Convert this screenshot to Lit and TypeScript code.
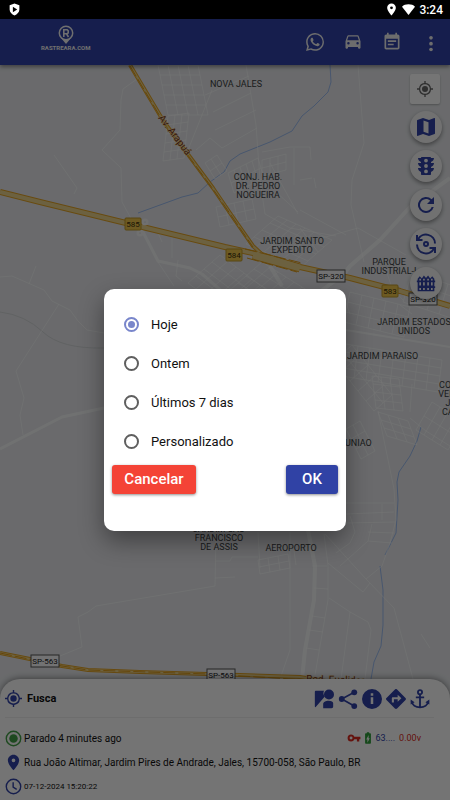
import { LitElement, html, svg, css } from "lit";
import { customElement, state } from "lit/decorators.js";

type Point = [number, number];

/** A patch of city blocks: origin, block vectors and block counts. */
interface Blocks { o: Point; u: Point; v: Point; n: number; m: number; }

const blocksPath = ({ o, u, v, n, m }: Blocks): string => {
  let d = "";
  for (let i = 0; i <= n; i++) {
    const x = o[0] + u[0] * i, y = o[1] + u[1] * i;
    d += `M${x} ${y}L${x + v[0] * m} ${y + v[1] * m}`;
  }
  for (let j = 0; j <= m; j++) {
    const x = o[0] + v[0] * j, y = o[1] + v[1] * j;
    d += `M${x} ${y}L${x + u[0] * n} ${y + u[1] * n}`;
  }
  return d;
};

const blocks: Blocks[] = [
  { o: [158, 65], u: [10, 0], v: [2, 10], n: 4, m: 5 },
  { o: [168, 116], u: [7, -1], v: [-1, 9], n: 3, m: 5 },
  { o: [205, 163], u: [6, -4], v: [5, 8], n: 2, m: 2 },
  { o: [216, 207], u: [9, -2], v: [2, 10], n: 4, m: 2 },
  { o: [228, 173], u: [6, -3], v: [3, 10], n: 5, m: 2 },
  { o: [262, 160], u: [8, -2], v: [0, 8], n: 3, m: 2 },
  { o: [278, 216], u: [9, 4], v: [-8, 7], n: 6, m: 4 },
  { o: [220, 255], u: [8, 6], v: [-8, 7], n: 6, m: 4 },
  { o: [262, 262], u: [8, 5], v: [-8, 7], n: 6, m: 5 },
  { o: [350, 292], u: [12, 3], v: [-2, 10], n: 5, m: 3 },
  { o: [346, 344], u: [12, 2], v: [-1, 8], n: 8, m: 4 },
  { o: [352, 345], u: [8, 10], v: [-9, 8], n: 5, m: 2 },
  { o: [372, 376], u: [9, 1], v: [1, 8], n: 3, m: 4 },
  { o: [378, 412], u: [10, 3], v: [3, 8], n: 3, m: 3 },
  { o: [432, 402], u: [8, 5], v: [-8, 14], n: 4, m: 2 },
  { o: [346, 429], u: [7, -4], v: [5, 10], n: 2, m: 3 },
  { o: [258, 560], u: [10, -2], v: [1, 7], n: 3, m: 2 },
  { o: [412, 272], u: [12, 4], v: [-3, 10], n: 4, m: 3 },
];

const streets = [
  "M137 79L123 89L121 100L120 130L102 150L121 168L122 202L133 222",
  "M54 155L77 188L74 194M36 266L29 284M0 277L12 276L44 290L52 301L70 310L78 321L87 330L104 333M59 304L16 371L24 398L20 415L23 435",
  "M60 656L82 647L78 617L88 612L96 606L215 586L216 535M215 578L235 577M216 561L230 561L232 557L258 557",
  "M246 65L256 125L260 180L265 214L290 228L336 236M205 95L249 76M213 112L251 93M215 130L256 110M222 148L257 128M196 150L210 138L222 148M212 90L188 150",
  "M290 147L310 147L311 160M294 148L294 185M262 152L290 147M300 180L312 178M314 178L316 188M270 163L298 214M276 192L298 212",
  "M358 65L364 143L352 180L351 205L364 262M322 238L358 228L406 255M346 235L300 210",
  "M156 228L162 242M172 236L172 258M178 260L176 276L182 281M158 262L174 286M300 228L318 252",
  "M378 411L394 489L396 520L390 543L382 566L366 579M346 503L394 503M346 514L394 512M346 523L395 522M382 504L382 520M372 524L368 541L340 566M368 532L394 533M368 541L392 543M350 516L355 532L350 543L336 553",
  "M410 412L412 384M410 418L426 431L450 446M325 534L366 579L394 608L413 679M328 563L363 592L370 583M329 598L350 612L368 622L371 630L365 679M350 612L341 679M324 534L328 565L328 600L315 675M258 532L260 568M290 532L290 650L280 679M294 551L296 565",
  "M312 566L327 566M314 588L328 589M312 616L325 618M309 630L323 632M306 648L319 650",
  "M421 634L430 648M386 270L392 288L403 300M345 300L350 314M400 305L412 314",
];

const avenues = [
  { d: "M142 230L158 261L190 268L202 274L225 294", w: 3 },
  { d: "M0 449L62 417L104 408", w: 3 },
  { d: "M450 178L410 207L380 240L350 266L344 274L306 302", w: 4 },
  { d: "M308 530L315 566L314 600L305 650L302 679", w: 4 },
  { d: "M270 266L282 286", w: 4 },
  { d: "M346 330L450 347", w: 2 },
];

const rivers = [
  "M330 65L331 82L328 92L314 106L302 116L292 131L270 142L240 154L230 161L224 172L210 182L198 193L182 197L138 213",
  "M421 427L417 441L410 456L399 472L397 482L398 500L396 533L385 555",
  "M380 566L383 590L383 625L381 646L374 662L371 679",
];

const highways = [
  { d: "M0 192L40 202L130 224L225 247L262 255L300 267L350 278L400 291L450 306", w: 6 },
  { d: "M253 255L300 268", w: 9 },
  { d: "M130 65L164 122L190 157L213 188L230 213L253 246L266 258", w: 4 },
  { d: "M0 653L30 659L62 666L88 670L140 672L207 674L300 677L345 684", w: 4 },
];

interface Place { x: number; y: number; lines: string[]; anchor?: string; }
const places: Place[] = [
  { x: 236, y: 87, lines: ["NOVA JALES"] },
  { x: 258, y: 180, lines: ["CONJ. HAB.", "DR. PEDRO", "NOGUEIRA"] },
  { x: 292, y: 244, lines: ["JARDIM SANTO", "EXPEDITO"] },
  { x: 389, y: 265, lines: ["PARQUE", "INDUSTRIAL-I"] },
  { x: 414, y: 325, lines: ["JARDIM ESTADOS", "UNIDOS"] },
  { x: 347, y: 359, lines: ["JARDIM PARAISO"], anchor: "start" },
  { x: 452, y: 388, lines: ["CONJ.", "VERDE", "JD.", "CAIC"] },
  { x: 345, y: 446, lines: ["UNIAO"], anchor: "start" },
  { x: 219, y: 532, lines: ["JARDIM SAO", "FRANCISCO", "DE ASSIS"] },
  { x: 291, y: 551, lines: ["AEROPORTO"] },
];

const exits = [
  { x: 125, y: 218, t: "585" },
  { x: 226, y: 249, t: "584" },
  { x: 382, y: 285, t: "583" },
];
const shields = [
  { x: 317, y: 270, t: "SP-320" },
  { x: 409, y: 293, t: "SP-320" },
  { x: 31, y: 655, t: "SP-563" },
  { x: 207, y: 669, t: "SP-563" },
];

@customElement("city-map")
export class CityMap extends LitElement {
  static styles = css`
    :host { display: block; height: 100%; background: #e6e8eb; }
    svg { display: block; width: 100%; height: 100%; font-family: Roboto, sans-serif; }
    .line { fill: none; stroke-linejoin: round; }
    .street { stroke: #fff; stroke-width: 1; opacity: 0.5; }
    .terrain { stroke: #d3d5d8; stroke-width: 1; }
    .avenue { stroke: #fff; opacity: 0.6; }
    .river { stroke: #9dbcf0; stroke-width: 1; }
    .edge { stroke: #e2a224; }
    .core { stroke: #ecd48c; }
    .stripe { stroke: #dd9a18; stroke-width: 1; stroke-dasharray: 12 3; }
    .place { font-size: 9px; fill: #3c3e42; }
    .road { font-size: 10px; fill: #7a3514; stroke: #f6e7bd; stroke-width: 1; paint-order: stroke; }
    .exit { fill: #eec54a; stroke: #c09a2a; }
    .shield { fill: #f8f9fa; stroke: #555; }
    .num { font-size: 8px; fill: #3d300c; text-anchor: middle; }
    .code { font-size: 8px; fill: #222; text-anchor: middle; }
    .stop { fill: #b9bbbd; stroke: #f4f4f4; stroke-width: 3; }
  `;

  render() {
    return html`
      <svg viewBox="0 65 450 735" preserveAspectRatio="xMidYMin slice" role="img" aria-label="Mapa">
        <path class="line terrain" d="M0 312Q25 315 43 332T104 348" />
        ${rivers.map((d) => svg`<path class="line river" d=${d} />`)}
        ${blocks.map((b) => svg`<path class="line street" d=${blocksPath(b)} />`)}
        ${streets.map((d) => svg`<path class="line street" d=${d} />`)}
        ${avenues.map((a) => svg`<path class="line avenue" d=${a.d} stroke-width=${a.w} />`)}
        ${highways.map((h) => svg`<path class="line edge" d=${h.d} stroke-width=${h.w} />`)}
        ${highways.map((h) => svg`<path class="line core" d=${h.d} stroke-width=${h.w - 2} />`)}
        <path class="line stripe" d="M245 249L302 263M247 258L297 272M130 66L164 123L190 158L213 189L253 247M0 653L62 666L88 670L207 674L345 682" />
        <circle class="stop" cx="145" cy="222" r="2" />
        <circle class="stop" cx="140" cy="233" r="2" />
        ${exits.map((e) => svg`
          <rect class="exit" x=${e.x} y=${e.y} width="16" height="12" rx="1" />
          <text class="num" x=${e.x + 8} y=${e.y + 9}>${e.t}</text>`)}
        ${shields.map((s) => svg`
          <rect class="shield" x=${s.x} y=${s.y} width="28" height="12" />
          <text class="code" x=${s.x + 14} y=${s.y + 9}>${s.t}</text>`)}
        ${places.map((p) => p.lines.map((line, i) => svg`
          <text class="place" x=${p.x} y=${p.y + i * 9} text-anchor=${p.anchor ?? "middle"}>${line}</text>`))}
        <text class="road" transform="translate(158 118) rotate(53)">Av. Arapuá</text>
        <text class="road" transform="translate(306 682) rotate(2)">Rod. Euclides</text>
      </svg>`;
  }
}

const icon = (body: unknown, cls = "") =>
  html`<svg class="icon ${cls}" viewBox="0 0 24 24" aria-hidden="true">${body}</svg>`;

const ICONS = {
  shield: svg`<path fill-rule="evenodd" d="M12 1L3 4v8c0 5 4 9 9 11 5-2 9-6 9-11V4zM9 7l8 5-8 5z"/>`,
  pin: svg`<path d="M12 1C7.600 1 4 4.500 4 8.900 4 14.800 12 23 12 23s8-8.200 8-14.100C20 4.500 16.400 1 12 1zm0 10.500a2.600 2.600 0 110-5.200 2.600 2.600 0 010 5.200z"/>`,
  wifi: svg`<path d="M12 22L0 7C3 4 7 2.500 12 2.500S21 4 24 7z"/>`,
  whatsapp: svg`<path d="M17.500 14.400c-.3-.15-1.760-.87-2.030-.97-.27-.1-.47-.15-.67.15-.2.300-.77.970-.94 1.160-.17.200-.35.220-.64.075-.3-.15-1.260-.46-2.390-1.475-.88-.79-1.480-1.760-1.650-2.060-.17-.3-.02-.46.13-.61.13-.13.300-.35.450-.52.150-.17.200-.3.300-.5.100-.2.050-.37-.025-.52-.075-.15-.67-1.610-.92-2.210-.24-.58-.49-.5-.67-.51-.17-.01-.37-.01-.57-.01s-.52.074-.79.370c-.27.300-1.040 1.020-1.040 2.480s1.060 2.880 1.210 3.070c.15.200 2.100 3.200 5.080 4.490.71.300 1.260.490 1.690.620.710.230 1.360.200 1.870.120.570-.085 1.760-.72 2.010-1.410.25-.7.250-1.290.170-1.410-.07-.12-.27-.2-.57-.35M12.050 21.800a9.900 9.900 0 01-5.030-1.380l-.36-.21-3.740.98 1-3.650-.24-.37a9.860 9.860 0 01-1.510-5.260c0-5.450 4.440-9.880 9.890-9.880a9.880 9.880 0 016.990 16.880c-1.870 1.870-4.350 2.890-7 2.890M20.460 3.490A11.820 11.820 0 0012.050 0C5.500 0 .160 5.340.157 11.890c0 2.100.55 4.140 1.590 5.950L.060 24l6.300-1.650a11.900 11.900 0 005.680 1.450c6.550 0 11.890-5.340 11.890-11.890a11.820 11.820 0 00-3.470-8.420"/>`,
  car: svg`<path d="M18.920 5.010C18.720 4.420 18.160 4 17.500 4h-11c-.66 0-1.210.42-1.420 1.010L3 11v8c0 .55.450 1 1 1h1c.55 0 1-.45 1-1v-1h12v1c0 .55.450 1 1 1h1c.55 0 1-.45 1-1v-8zM6.500 15a1.500 1.500 0 110-3 1.500 1.500 0 010 3zm11 0a1.500 1.500 0 110-3 1.500 1.500 0 010 3zM5 10l1.500-4.500h11L19 10z"/>`,
  event: svg`<path d="M17 10H7v2h10zm2-7h-1V1h-2v2H8V1H6v2H5c-1.110 0-2 .9-2 2v14c0 1.100.890 2 2 2h14c1.100 0 2-.9 2-2V5c0-1.100-.9-2-2-2zm0 16H5V8h14zm-5-5H7v2h7z"/>`,
  more: svg`<circle cx="12" cy="7" r="2.200"/><circle cx="12" cy="14" r="2.200"/><circle cx="12" cy="21" r="2.200"/>`,
  locate: svg`<path fill-rule="evenodd" d="M21 11A9 9 0 0013 3V0h-2v3A9 9 0 003 11H0v2h3A9 9 0 0011 21v3h2v-3A9 9 0 0021 13h3v-2zM12 19.200a7.200 7.200 0 110-14.400 7.200 7.200 0 010 14.400z"/><circle cx="12" cy="12" r="4.500"/>`,
  map: svg`<path fill-rule="evenodd" d="M20.500 3l-.2.030L15 5.100 9 3 3.400 4.900c-.2.070-.4.250-.4.480V20.500c0 .3.300.5.500.470l5.500-2.070 6 2.100 5.600-1.900c.2-.07.400-.25.400-.48V3.500c0-.3-.3-.5-.5-.5zM9.500 5.400l5 1.750v11.450l-5-1.750z"/>`,
  traffic: svg`<path fill-rule="evenodd" d="M20 9h-3V7.900c1.700-.5 3-2 3-3.900h-3c0-.6-.4-1-1-1H8c-.6 0-1 .4-1 1H4c0 1.900 1.300 3.400 3 3.900V9H4c0 1.900 1.300 3.400 3 3.900V14H4c0 1.900 1.300 3.400 3 3.900V20c0 .6.400 1 1 1h8c.6 0 1-.4 1-1v-2.100c1.700-.5 3-2 3-3.900h-3v-1.100c1.700-.5 3-2 3-3.900zM12 8.500a1.900 1.900 0 110-3.800 1.900 1.900 0 010 3.800zm0 5.400a1.900 1.900 0 110-3.800 1.900 1.900 0 010 3.800zm0 5.400a1.900 1.900 0 110-3.800 1.900 1.900 0 010 3.800z"/>`,
  refresh: svg`<path d="M17.650 6.350A8 8 0 1019.730 14h-2.080A6 6 0 1112 6c1.660 0 3.140.69 4.220 1.780L13 11h7V4z"/>`,
  cycle: svg`<g fill="none" stroke="currentColor" stroke-width="2"><path d="M4 7.500A9 9 0 0121 11.500M20 16.500A9 9 0 013 12.500M3 3v5h5.500M21 21v-5h-5.500"/><circle cx="12" cy="12" r="2"/></g>`,
  fence: svg`<path fill-rule="evenodd" d="M2 22V11H1V9h1V7l2.500-3L7 6.500 9.500 3 12 6l2.500-3L17 6.500 19.500 4 22 7v2h1v2h-1v5h1v2h-1v4zM4 9h2V7H4zm4.500 0h2V7h-2zm5 0h2V7h-2zM18 9h2V7h-2zM4 15h2v-4H4zm4.500 0h2v-4h-2zm5 0h2v-4h-2zm4.500 0h2v-4h-2zM4 20.500h2V18H4zm4.500 0h2V18h-2zm5 0h2V18h-2zm4.500 0h2V18h-2z"/>`,
  street: svg`<path d="M1 3.500C1 2.500 1.500 2 2.500 2H12a6.500 6.500 0 001 7L1.800 22C1.300 22 1 21.500 1 21z"/><circle cx="18" cy="6.500" r="6"/><path d="M11 23v-5c0-2.500 3-4 6.500-4s5.500 1 5.500 3v4c0 1.300-.7 2-2 2z"/>`,
  share: svg`<g><circle cx="19.500" cy="4" r="3.500"/><circle cx="4.500" cy="12" r="3.500"/><circle cx="19.500" cy="20.500" r="3.500"/><path fill="none" stroke="currentColor" stroke-width="2" d="M19.500 4l-15 8 15 8.500"/></g>`,
  info: svg`<path fill-rule="evenodd" d="M12 0a12 12 0 100 24 12 12 0 000-24zm1.500 18h-3v-8h3zm0-10h-3V5h3z"/>`,
  directions: svg`<path fill-rule="evenodd" d="M23.400 10.700L13.300.6a1.800 1.800 0 00-2.600 0L.6 10.700a1.800 1.800 0 000 2.600l10.100 10.100c.7.700 1.900.7 2.600 0l10.100-10.100c.7-.7.700-1.900 0-2.600zM14 15.200v-3H9.500v4H7v-5c0-.8.500-1.300 1.300-1.300H14v-3L18.500 11z"/>`,
  anchor: svg`<g fill="none" stroke="currentColor" stroke-width="2.200"><circle cx="12" cy="3.800" r="2.500"/><path d="M12 6.500V22M7 10h10M2 14.500C2.500 19.500 7 22 12 22s9.500-2.500 10-7.500"/></g><path d="M.8 18.500V12.500l4.700 3.500zM23.200 18.500V12.500L18.500 16z"/>`,
  target: svg`<circle cx="12" cy="12" r="10.200" fill="none" stroke="currentColor" stroke-width="2"/><circle cx="12" cy="12" r="6"/>`,
  clock: svg`<path fill="none" stroke="currentColor" stroke-width="2" d="M12 1.800a10.200 10.200 0 100 20.400 10.200 10.200 0 000-20.400zM11.500 6v7l5 3"/>`,
  key: svg`<path fill-rule="evenodd" d="M12.650 10A6 6 0 007 6a6 6 0 100 12 6 6 0 005.650-4H17v4h4v-4h2v-4zM7 14.500a2.500 2.500 0 110-5 2.500 2.500 0 010 5z"/>`,
  battery: svg`<path fill-rule="evenodd" d="M15.700 4H14V2h-4v2H8.300C7.600 4 7 4.600 7 5.300v15.400c0 .7.600 1.300 1.300 1.300h7.400c.7 0 1.300-.6 1.300-1.300V5.300c0-.7-.6-1.300-1.300-1.300zM11 20v-5.500H9L13 7v5.500h2z"/>`,
};

@customElement("app-root")
export class AppRoot extends LitElement {
  @state() private period = "Hoje";

  static styles = css`
    :host {
      display: flex; flex-direction: column; position: relative; min-height: 100vh;
      font-family: Roboto, "Noto Sans", sans-serif; color: #111; --brand: #3042a8;
    }
    button { font: inherit; border: 0; padding: 0; margin: 0; background: none; color: inherit; cursor: pointer; }
    .icon { display: block; width: 20px; height: 20px; fill: currentColor; flex: none; }

    .status { display: flex; align-items: center; gap: 4px; height: 19px; padding: 0 7px 0 8px; background: #000; color: #fff; font-size: 12px; font-weight: 500; position: relative; z-index: 2; }
    .status .icon { width: 13px; height: 13px; }
    .push { margin-left: auto; }

    .bar { display: flex; align-items: center; height: 46px; padding: 0 9px 0 41px; background: var(--brand); color: #fff; box-shadow: 0 2px 4px rgba(0, 0, 0, 0.4); position: relative; }
    .logo { display: flex; flex-direction: column; align-items: center; padding-bottom: 8px; font-size: 6px; font-weight: 700; line-height: 8px; color: #f1f1f1; }
    .logo svg { width: 16px; height: 19px; }
    .actions { display: flex; align-items: center; gap: 19px; margin-left: auto; color: #eee; }
    .actions .wa { width: 18px; height: 18px; }

    .body { flex: 1; display: grid; grid-template: minmax(0, 1fr) / minmax(0, 1fr); }
    .body > * { grid-area: 1 / 1; }
    .tools { justify-self: end; align-self: start; display: flex; flex-direction: column; gap: 7px; width: 32px; padding: 9px 8px 0 0; z-index: 0; }
    .tool { display: grid; place-items: center; width: 32px; height: 32px; border-radius: 50%; background: #f6f6f6; color: var(--brand); box-shadow: 0 2px 4px rgba(0, 0, 0, 0.4); }
    .tool .icon { width: 24px; height: 24px; }
    .tool.square { width: 30px; height: 30px; border-radius: 2px; color: #666; background: #fff; box-shadow: 0 1px 2px rgba(0, 0, 0, 0.25); }
    .square .icon { width: 16px; height: 16px; }
    .fence .icon { width: 20px; height: 20px; }

    .sheet { align-self: end; z-index: 0; background: #fdfdfd; border-radius: 20px 20px 0 0; box-shadow: 0 -1px 6px rgba(0, 0, 0, 0.4); padding-bottom: 2px; }
    .head { display: flex; align-items: center; gap: 5px; height: 37px; margin: 0 16px 8px 5px; padding: 1px 4px 0 0; border-bottom: 1px solid #eee; color: var(--brand); }
    .head h1 { flex: 1; margin: 0; font-size: 11px; font-weight: 700; color: #111; }
    .head > .icon { width: 17px; height: 17px; }
    .links { display: flex; gap: 4px; }
    .line { display: flex; align-items: center; height: 24px; gap: 2px; padding: 0 29px 0 5px; font-size: 10px; }
    .line > .icon { width: 17px; height: 17px; color: var(--brand); }
    .line > .icon.on { color: #43a047; }
    .grow { flex: 1; white-space: nowrap; }
    .small { font-size: 8px; }
    .sensors { display: flex; align-items: center; gap: 4px; font-size: 9px; color: var(--brand); }
    .sensors .icon { width: 14px; height: 14px; }
    .sensors .key, .sensors .volt { color: #d92b20; }
    .sensors .battery { color: #2e9e3a; margin: 0 -4px; }

    .scrim { position: absolute; inset: 19px 0 0; z-index: 1; display: grid; place-items: center; background: rgba(0, 0, 0, 0.54); }
    .dialog { box-sizing: border-box; width: 53%; min-width: 242px; max-width: 320px; padding: 16px 8px 37px; border-radius: 10px; background: #fff; box-shadow: 0 10px 24px rgba(0, 0, 0, 0.4); }
    fieldset { border: 0; margin: 0; padding: 0 12px; }
    .option { display: flex; align-items: center; gap: 12px; height: 39px; font-size: 13px; color: #111; }
    .option input { appearance: none; box-sizing: border-box; width: 15px; height: 15px; margin: 0; border: 2px solid #5f5f5f; border-radius: 50%; display: grid; place-items: center; }
    .option input:checked { border-color: #7986cb; }
    .option input:checked::before { content: ""; width: 7px; height: 7px; border-radius: 50%; background: #7986cb; }
    .buttons { display: flex; justify-content: space-between; padding-top: 4px; }
    .btn { height: 29px; border-radius: 3px; color: #fff; font-size: 15px; font-weight: 500; box-shadow: 0 1px 3px rgba(0, 0, 0, 0.45); }
    .cancel { width: 84px; background: #f44336; }
    .ok { width: 52px; background: #3042a5; }
  `;

  private tool(name: keyof typeof ICONS, label: string, cls = "") {
    return html`<button class="tool ${cls}" aria-label=${label}>${icon(ICONS[name])}</button>`;
  }

  private action(name: keyof typeof ICONS, label: string, cls = "") {
    return html`<button aria-label=${label}>${icon(ICONS[name], cls)}</button>`;
  }

  render() {
    return html`
      <div class="status">
        ${icon(ICONS.shield)}
        ${icon(ICONS.pin, "push")}
        ${icon(ICONS.wifi)}
        <span>3:24</span>
      </div>

      <header class="bar">
        <div class="logo">
          <svg viewBox="0 0 16 19" aria-hidden="true">
            <path d="M3 13l5 6 5-6z" fill="currentColor" />
            <circle cx="8" cy="8" r="6.700" fill="#3042a8" stroke="currentColor" stroke-width="1.500" />
            <path d="M5.800 12V4.800h3.400l1 1v2l-1 1H6.500M8.500 8.800l2 3.200" fill="none" stroke="currentColor" stroke-width="1.600" />
          </svg>
          <span>RASTREARA.COM</span>
        </div>
        <nav class="actions">
          ${this.action("whatsapp", "WhatsApp", "wa")}
          ${this.action("car", "Veículos")}
          ${this.action("event", "Eventos")}
          ${this.action("more", "Mais opções")}
        </nav>
      </header>

      <main class="body">
        <city-map></city-map>
        <div class="tools">
          ${this.tool("locate", "Minha localização", "square")}
          ${this.tool("map", "Tipo de mapa")}
          ${this.tool("traffic", "Trânsito")}
          ${this.tool("refresh", "Atualizar")}
          ${this.tool("cycle", "Alternar veículo")}
          ${this.tool("fence", "Cercas", "fence")}
        </div>
        <section class="sheet">
          <div class="head">
            ${icon(ICONS.locate)}
            <h1>Fusca</h1>
            <div class="links">
              ${this.action("street", "Street View")}
              ${this.action("share", "Compartilhar")}
              ${this.action("info", "Informações")}
              ${this.action("directions", "Rotas")}
              ${this.action("anchor", "Âncora")}
            </div>
          </div>
          <div class="line">
            ${icon(ICONS.target, "on")}
            <span class="grow">Parado 4 minutes ago</span>
            <div class="sensors">
              ${icon(ICONS.key, "key")}
              ${icon(ICONS.battery, "battery")}
              <span>63....</span>
              <span class="volt">0.00v</span>
            </div>
          </div>
          <div class="line">
            ${icon(ICONS.pin)}
            <span class="grow">Rua João Altimar, Jardim Pires de Andrade, Jales, 15700-058, São Paulo, BR</span>
          </div>
          <div class="line">
            ${icon(ICONS.clock)}
            <span class="grow small">07-12-2024 15:20:22</span>
          </div>
        </section>
      </main>

      <div class="scrim">
        <form class="dialog" role="dialog" aria-modal="true" aria-label="Período" @submit=${(e: Event) => e.preventDefault()}>
          <fieldset>
            ${["Hoje", "Ontem", "Últimos 7 dias", "Personalizado"].map((p) => html`
              <label class="option">
                <input type="radio" name="period" .value=${p} .checked=${this.period === p} @change=${() => (this.period = p)} />
                ${p}
              </label>`)}
          </fieldset>
          <div class="buttons">
            <button type="button" class="btn cancel">Cancelar</button>
            <button type="submit" class="btn ok">OK</button>
          </div>
        </form>
      </div>
    `;
  }
}
